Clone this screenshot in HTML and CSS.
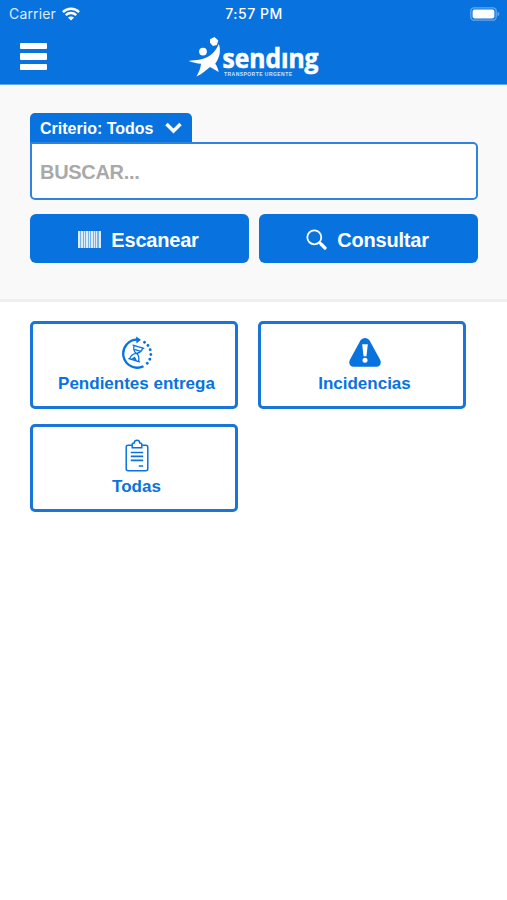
FILE: index.html
```html
<!DOCTYPE html>
<html lang="es">
<head>
<meta charset="utf-8">
<title>Sending</title>
<link rel="stylesheet" href="styles.css">
</head>
<body>
<header class="header">
  <div class="status">
    <div class="carrier"><span>Carrier</span>
      <svg width="18" height="14" viewBox="0 0 18 14" fill="none" stroke="#fff" stroke-width="2.5"><path d="M.9 5.2C5.5.7 12.5.7 17.1 5.2M3.8 8.2c3-2.8 7.400-2.800 10.400 0"/><path d="M9 13.600L5.900 10.600c1.800-1.500 4.400-1.500 6.200 0z" fill="#fff" stroke="none"/></svg>
    </div>
    <span class="clock">7:57 PM</span>
    <svg class="battery" width="30" height="14" viewBox="0 0 30 14"><rect x=".8" y=".8" width="25.400" height="12.400" rx="3.500" fill="none" stroke="#67a9ee" stroke-width="1.300"/><rect x="2.600" y="2.600" width="21.800" height="8.800" rx="1.800" fill="#fff"/><path d="M27.500 4.800c2.400.8 2.400 3.600 0 4.400z" fill="#67a9ee"/></svg>
  </div>
  <div class="bar">
    <button class="menu" aria-label="Menú"><i></i><i></i><i></i></button>
    <svg class="logo" width="134" height="48" viewBox="0 0 134 48" fill="#fff">
      <path d="M22 3.300L26.500 1l3.800 3.500-1.400 4.600-4 .9-2.900-3.200z"/>
      <circle cx="15" cy="15.600" r="3.900"/>
      <path d="M30.800 8C28.500 13.500 25 18.300 19 21.300c-5 2.300-10 3-18.500 3.600 4.600 1.500 8 2.400 12.500 2.900-.3 4.500-2 8-4.500 12.700 5.500-2.500 9.500-6.100 13.500-9.500l8.700 5c-.7-3.500-1.700-5.800-3.500-8.300 3.800-5.300 6.300-12.200 3.600-19.700z"/>
      <text class="brand" x="34.500" y="32.200" textLength="96" lengthAdjust="spacingAndGlyphs">sendıng</text>
      <text class="tagline" x="36" y="39.800" textLength="68" lengthAdjust="spacing">TRANSPORTE URGENTE</text>
    </svg>
  </div>
</header>
<section class="search">
  <button class="criteria"><span>Criterio: Todos</span><svg width="17" height="12" viewBox="0 0 17 12" fill="none" stroke="#fff" stroke-width="3.500"><path d="M1.500 2l7 7 7-7"/></svg></button>
  <input class="query" type="text" placeholder="BUSCAR...">
  <div class="actions">
    <button class="action">
      <svg width="23" height="17" viewBox="0 0 23 17" fill="#fff"><path d="M0 0h23v17H0z" opacity=".45"/><path d="M0 0h2v17H0zM3 0h2v17H3zM6 0h1v17H6zM8 0h2v17H8zM11 0h1v17h-1zM13 0h2v17h-2zM16 0h1v17h-1zM18 0h1v17h-1zM21 0h2v17h-2z" opacity=".75"/></svg>
      <span class="scan">Escanear</span>
    </button>
    <button class="action">
      <svg width="21" height="21" viewBox="0 0 21 21" fill="none" stroke="#fff"><circle cx="8.300" cy="8.300" r="7" stroke-width="1.800"/><path d="M13.300 13.300l2 2" stroke-width="2"/><path d="M15 15l4 4" stroke-width="3.200" stroke-linecap="round"/></svg>
      <span class="consult">Consultar</span>
    </button>
  </div>
</section>
<main class="cards">
  <button class="card">
    <svg width="32" height="34" viewBox="0 0 32 34" fill="none" stroke="#0873de"><path d="M22.500 30.200A14 14 0 1 1 17 3.700" stroke-width="2.300"/><path d="M15 .5l5 3.200-4.500 3.800z" fill="#0873de" stroke="none"/><path d="M23.500 6.200A14 14 0 0 1 25 28.500" stroke-width="2.900" stroke-linecap="round" stroke-dasharray=".01 4.750"/><path d="M12 9.200l10.800 3.200M7.800 22.600l10.800 3.200M13 9.800c-1 4.200.2 6 2.200 7.500-3 .5-5.700 2.200-6.400 5.500M21.700 12.300c-1 3.200-3.500 4.700-6.300 5 1.900 1.500 3 4.200 2.200 8M14 13.600l5.200 1.600" stroke-width="1.300" stroke-linecap="round"/><path d="M10 23l3.800-2.400 2.300 4.200z" fill="#0873de" stroke="none"/></svg>
    <span class="pending">Pendientes entrega</span>
  </button>
  <button class="card">
    <svg width="32" height="34" viewBox="0 0 32 34"><path d="M11.400 4.500c2-3.500 7.200-3.500 9.200 0l10.500 19.300c1.700 3.600-.1 6.900-3.700 6.900H4.600c-3.600 0-5.400-3.300-3.700-6.900z" fill="#0873de"/><path d="M13.200 8.300h5.600l-1.300 12h-3z" fill="#fff"/><circle cx="16" cy="24.200" r="2.500" fill="#fff"/></svg>
    <span class="incidents">Incidencias</span>
  </button>
  <button class="card">
    <svg width="32" height="34" viewBox="0 0 32 34" fill="none" stroke="#0873de" stroke-width="1.500"><path d="M10.800 6.200H7.200a2 2 0 0 0-2 2v21.600a2 2 0 0 0 2 2h17.600a2 2 0 0 0 2-2V8.200a2 2 0 0 0-2-2h-3.600"/><path d="M11.200 8.800V5.600c0-1 .8-1.600 2-1.600.3-3.700 5.300-3.700 5.600 0 1.200 0 2 .6 2 1.600v3.200z"/><path d="M9.800 13.500h12.400M9.800 17.300h12.400M9.800 21.300h12.400M17.800 27h4.400" stroke-width="1.700"/></svg>
    <span class="all">Todas</span>
  </button>
</main>
</body>
</html>
```

FILE: styles.css
```css
* { box-sizing: border-box; }
body { margin: 0; background: #fff; font-family: "Liberation Sans", Arial, sans-serif; }
button { font: inherit; border: 0; margin: 0; padding: 0; }
svg { display: block; flex: none; }
.header { height: 85px; background: #0873de; border-bottom: 1px solid #65a7eb; color: #fff; }
.status { height: 28px; padding: 0 7px 0 9px; display: grid; grid-template-columns: 1fr auto 1fr; align-items: center; font: 14px/28px Inter, sans-serif; }
.carrier { display: flex; align-items: center; gap: 6px; color: #dcecfd; letter-spacing: .15px; }
.clock { font-weight: 500; letter-spacing: .5px; margin-left: -1px; }
.battery { justify-self: end; margin-top: -1px; }
.bar { height: 56px; display: grid; grid-template-columns: 168px 134px; padding-left: 20px; align-items: start; }
.menu { width: 27px; margin-top: 15px; background: none; display: flex; flex-direction: column; gap: 4px; }
.menu i { display: block; width: 27px; height: 6.300px; border-radius: 1px; background: #fff; }
.logo { margin-top: 8px; overflow: visible; }
.brand { font: bold 26px/1 "Open Sans", sans-serif; stroke: #fff; stroke-width: .6px; }
.tagline { font: bold 5px/1 "Liberation Sans", sans-serif; fill: #cfe4fa; }
.search { height: 217px; padding: 28px 29px 0 30px; background: #f9f9f9; border-bottom: 3px solid #efefef; }
.criteria { width: 162px; height: 30px; padding: 0 10px; display: flex; align-items: center; justify-content: space-between; background: #0873de; color: #fff; border-radius: 5px 5px 0 0; font-size: 16px; font-weight: bold; }
.criteria span { padding-top: 2px; }
.query { display: block; width: 100%; height: 58px; margin-top: -1px; padding: 2px 8px 0; background: #fff; border: 2px solid #2e83dc; border-radius: 0 5px 5px 5px; font: bold 20px "Liberation Sans", sans-serif; letter-spacing: -.3px; }
.query::placeholder { color: #a9a9a9; opacity: 1; }
.actions { display: grid; grid-template-columns: 1fr 1fr; gap: 10px; margin-top: 14px; }
.action { height: 49px; padding: 2px 2px 0 0; display: flex; align-items: center; justify-content: center; gap: 10px; background: #0873de; color: #fff; border-radius: 6px; font-size: 20px; font-weight: bold; letter-spacing: -.2px; }
.action span { padding-top: 2px; }
.cards { display: grid; grid-template-columns: 208px 208px; gap: 15px 20px; padding: 19px 30px; }
.card { height: 88px; padding-top: 12px; display: flex; flex-direction: column; align-items: center; background: #fff; color: #0873de; border: 3px solid #1976d8; border-radius: 5px; font-size: 17px; font-weight: bold; line-height: 20px; }
.card span { margin-top: 4px; padding-left: 5px; }
.card svg { margin-left: 5px; }
```
